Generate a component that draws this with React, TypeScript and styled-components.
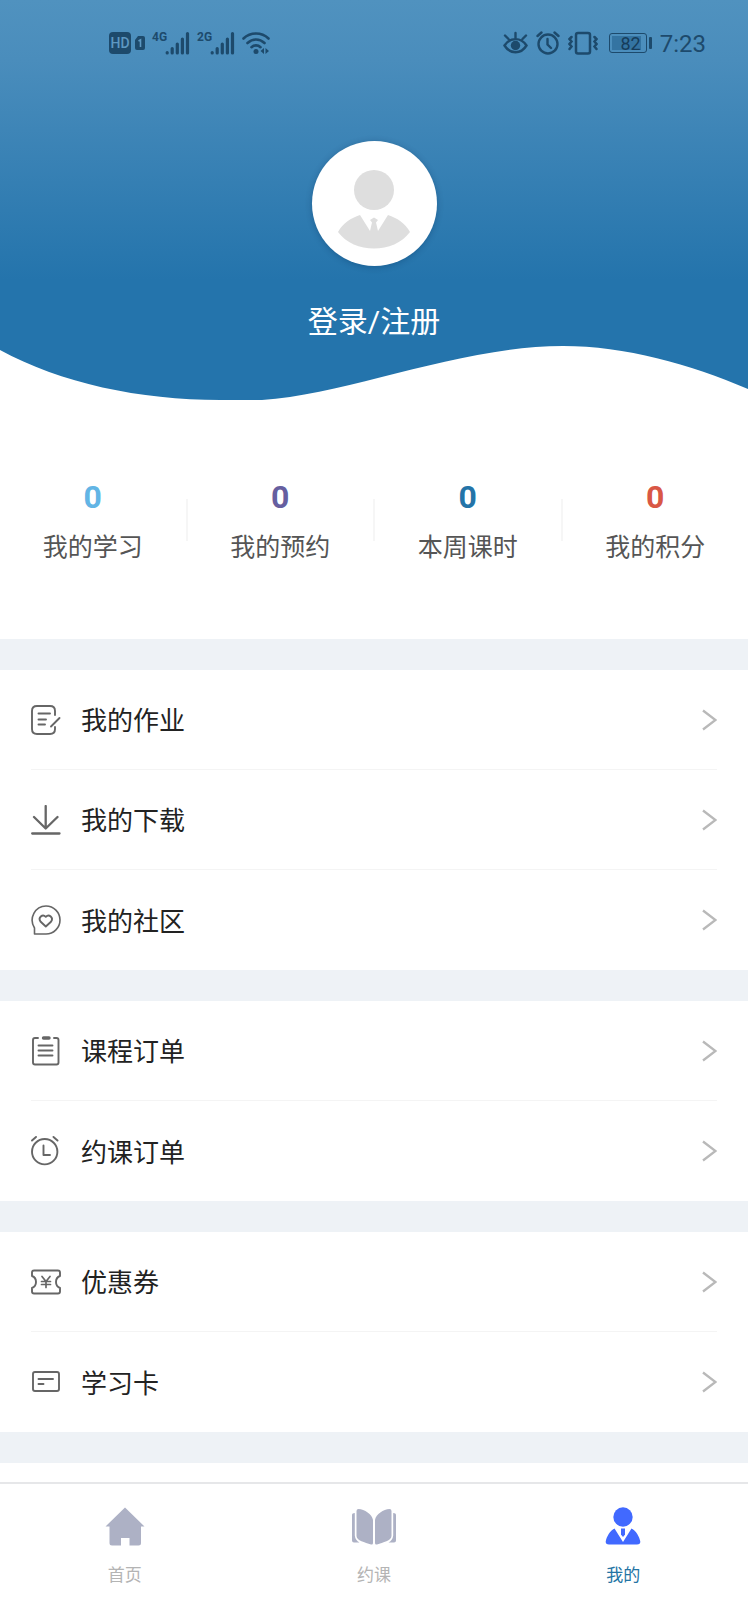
import React from "react";
import styled, { createGlobalStyle } from "styled-components";

const GlobalStyle = createGlobalStyle`
  * { box-sizing: border-box; }
  body {
    margin: 0;
    background: #fff;
    font-family: Roboto, "Noto Sans CJK SC", sans-serif;
  }
  a { color: inherit; text-decoration: none; }
  svg { display: block; flex: none; }
`;

const INK = "#1d4a6c";

const Page = styled.div`
  display: flex;
  flex-direction: column;
  min-height: 100vh;
  background: #fff;
`;

const Hero = styled.header`
  position: relative;
  display: flex;
  flex-direction: column;
  align-items: center;
  padding-bottom: 58px;
  background: linear-gradient(#5092bf 0, #4a8dbc 60px, #2474ac 280px);
`;

const Wave = styled.svg`
  position: absolute;
  left: 0;
  bottom: 0;
  width: 100%;
  height: 56px;
`;

const StatusBar = styled.div`
  display: flex;
  align-items: center;
  justify-content: space-between;
  width: 100%;
  height: 86px;
  padding: 0 42px 0 109px;
  color: ${INK};
`;

const StatusGroup = styled.div<{ $gap: number }>`
  display: flex;
  align-items: center;
  gap: ${(p) => p.$gap}px;
`;

const HdBadge = styled.span`
  width: 22px;
  height: 22px;
  border-radius: 4px;
  background: ${INK};
  color: #5d98c2;
  font-size: 14px;
  font-weight: 500;
  line-height: 22px;
  text-align: center;
`;

const Signal = styled.div`
  display: flex;
`;

const Network = styled.span`
  width: 13px;
  height: 22px;
  font-size: 12px;
  font-weight: 700;
  line-height: 12px;
`;

const Battery = styled.div`
  display: flex;
  align-items: center;
  gap: 2px;
  margin-left: 3px;
`;

const BatteryCell = styled.span`
  width: 38px;
  height: 20px;
  padding: 2px;
  border: 1px solid ${INK};
  border-radius: 3px;
`;

const BatteryLevel = styled.span`
  display: block;
  width: 29px;
  height: 14px;
  background: #3474a2;
  color: #163c5a;
  font-size: 18px;
  line-height: 15px;
  text-align: right;
`;

const BatteryTip = styled.span`
  width: 3px;
  height: 12px;
  border-radius: 1px;
  background: ${INK};
`;

const Clock = styled.time`
  font-size: 24px;
  line-height: 28px;
  padding-top: 2px;
`;

const Avatar = styled.div`
  display: flex;
  align-items: flex-end;
  justify-content: center;
  width: 125px;
  height: 125px;
  margin-top: 55px;
  padding-bottom: 16px;
  border-radius: 50%;
  background: #fff;
  box-shadow: 0 1px 6px rgba(0, 40, 80, 0.3);
`;

const LoginButton = styled.button`
  margin-top: 35px;
  padding: 0;
  border: 0;
  background: none;
  color: #fff;
  font-family: inherit;
  font-size: 30px;
  line-height: 41px;
  cursor: pointer;
`;

const Stats = styled.section`
  display: flex;
  padding: 81px 0 73px;
`;

const Stat = styled.a`
  display: flex;
  flex: 1;
  flex-direction: column;
  align-items: center;
  gap: 17px;
`;

const StatValue = styled.strong<{ $color: string }>`
  color: ${(p) => p.$color};
  font-size: 32px;
  line-height: 32px;
`;

const StatLabel = styled.span`
  color: #555;
  font-size: 25px;
  line-height: 36px;
  white-space: nowrap;
`;

const StatDivider = styled.span`
  width: 2px;
  height: 42px;
  margin-top: 18px;
  background: #f6f6f6;
`;

const Menu = styled.nav`
  padding: 0 31px;
  border-top: 31px solid #eef2f6;
`;

const MenuRow = styled.a`
  display: flex;
  align-items: center;
  height: 100px;
  color: #222;
  font-size: 26px;
  line-height: 40px;

  &:not(:last-child) {
    border-bottom: 1px solid #f4f4f4;
  }
`;

const MenuLabel = styled.span`
  flex: 1;
  margin-left: 20px;
  padding-top: 3px;
`;

const Spacer = styled.div`
  flex: 1;
  min-height: 18px;
  border-top: 31px solid #eef2f6;
`;

const TabBar = styled.nav`
  position: sticky;
  bottom: 0;
  display: flex;
  height: 118px;
  padding-top: 23px;
  border-top: 2px solid #e6e7e9;
  background: #fff;
`;

const Tab = styled.a<{ $active?: boolean }>`
  display: flex;
  flex: 1;
  flex-direction: column;
  align-items: center;
  gap: 15px;
  color: ${(p) => (p.$active ? "#2474a4" : "#b4b4b4")};
  font-size: 17px;
  line-height: 26px;
`;

const SimIcon = () => (
  <svg width="10" height="14" viewBox="0 0 10 14">
    <path d="M3 0H8a2 2 0 0 1 2 2V12a2 2 0 0 1-2 2H2a2 2 0 0 1-2-2V4Z" fill={INK} />
    <path d="M3.500 5 5.500 3.800V11" fill="none" stroke="#5d98c2" strokeWidth="1.600" />
  </svg>
);

const BarsIcon = () => (
  <svg width="25" height="24" viewBox="0 0 25 24" stroke={INK} strokeWidth="3.200" strokeLinecap="round">
    <path d="M2.200 21.500V22M7.200 17.500V22M12.300 13V22M17.400 8V22M22.500 2.500V22" />
  </svg>
);

const WifiIcon = () => (
  <svg width="28" height="24" viewBox="0 0 28 24" fill="none" stroke={INK} strokeWidth="2.600" strokeLinecap="round">
    <path d="M1.500 7.500C8.500.8 19.500.8 26.500 7.500M5.500 12C10.500 7.300 17.500 7.300 22.500 12M9.500 16.200C12 13.800 16 13.800 18.500 16.200" />
    <circle cx="14" cy="20.500" r="2.500" fill={INK} stroke="none" />
    <path d="M22 17v6l-3.500-3ZM23.500 17v6l3.500-3Z" fill={INK} stroke="none" />
  </svg>
);

const EyeIcon = () => (
  <svg width="25" height="24" viewBox="0 0 25 24" fill="none" stroke={INK} strokeWidth="2.400" strokeLinecap="round">
    <path d="M1.500 14.500C7 6 18 6 23.500 14.500 18 23.500 7 23.500 1.500 14.500ZM12.500 7V2M5.500 8 2 4.500M19.500 8 23 4.500" />
    <circle cx="12.500" cy="14.500" r="4.700" fill={INK} stroke="none" />
  </svg>
);

const AlarmIcon = () => (
  <svg width="24" height="24" viewBox="0 0 24 24" fill="none" stroke={INK} strokeWidth="2.400" strokeLinecap="round">
    <circle cx="12" cy="13" r="9.500" />
    <path d="M1.500 5 5.500 1.500M22.500 5 18.500 1.500M11.500 8V13.500L15 17" />
  </svg>
);

const VibrateIcon = () => (
  <svg width="30" height="24" viewBox="0 0 30 24" fill="none" stroke={INK} strokeWidth="2.500" strokeLinecap="round">
    <rect x="8" y="2" width="14" height="20.500" rx="2" />
    <path d="m3.500 6-2 2 2 2.500-2 2.500 2 2.500-2 2.500M26.500 6l2 2-2 2.500 2 2.500-2 2.500 2 2.500" />
  </svg>
);

const AvatarIcon = () => (
  <svg width="74" height="80" viewBox="0 0 74 80" fill="#dedede">
    <circle cx="37" cy="20" r="20" />
    <path d="M23 45 33 61 35 52.500 33 50 37 47.500 41 50 39 52.500 41 61 51 45C60 48 68 53 73 62 57 84 17 84 1 62 6 53 14 48 23 45Z" />
  </svg>
);

const Line = ({ children }: { children: React.ReactNode }) => (
  <svg
    width="30"
    height="30"
    viewBox="0 0 30 30"
    fill="none"
    stroke="#666"
    strokeWidth="1.900"
    strokeLinecap="round"
    strokeLinejoin="round"
  >
    {children}
  </svg>
);

const HomeworkIcon = () => (
  <Line>
    <path d="M24 10V6Q24 1 19 1H6Q1 1 1 6V24Q1 29 6 29H19Q24 29 24 24V22M7.500 8.500H19M7.500 14.500H15M7.500 19.500H14M20 21.500 28.500 13" />
  </Line>
);

const DownloadIcon = () => (
  <Line>
    <path d="M14.700 1V23M3 12 14.700 23.500 26.500 12M1.200 28.500H28.500" strokeWidth="2.300" />
  </Line>
);

const CommunityIcon = () => (
  <Line>
    <path d="M15 1A14 14 0 1 1 15 29H3.500V23C-2.500 13.500 4 1 15 1Z" strokeWidth="1.600" />
    <path d="M14.800 21.500 9.700 16.800C6.500 12.800 11.500 8.500 14.800 11.800 18 8.500 23 12.800 20 16.800Z" />
  </Line>
);

const CourseOrderIcon = () => (
  <Line>
    <path d="M7 2H4Q2 2 2 4V26.500Q2 28.500 4 28.500H25.500Q27.500 28.500 27.500 26.500V4Q27.500 2 25.500 2H23M7.500 9.500H21.500M7.500 14.500H21.500M7.500 19.500H21.500" />
    <path d="M12.500 2H18" strokeWidth="3.400" />
  </Line>
);

const BookingOrderIcon = () => (
  <Line>
    <circle cx="13.700" cy="15.700" r="12.700" />
    <path d="M1 4.500 5 1M26.500 4.500 22.500 1M12.500 9.500V19H19" />
  </Line>
);

const CouponIcon = () => (
  <Line>
    <path d="M3 3.500H27Q29 3.500 29 5.500V9Q25 10.500 25 15T29 21V24.500Q29 26.500 27 26.500H3Q1 26.500 1 24.500V21Q5 19.500 5 15T1 9V5.500Q1 3.500 3 3.500Z" />
    <path d="m11 9.500 4 5 4-5M15 14.500V20.500M10.500 14.500H19.500M10.500 17.500H19.500" strokeWidth="1.700" />
  </Line>
);

const CardIcon = () => (
  <Line>
    <rect x="2" y="5" width="26" height="19" rx="2" />
    <path d="M7.500 12H22M7.500 17H12.500" />
  </Line>
);

const Chevron = () => (
  <svg width="15" height="22" viewBox="0 0 15 22" fill="none" stroke="#b9b9b9" strokeWidth="2.300">
    <path d="M1 1.500 13.500 11 1 20.500" />
  </svg>
);

const HomeIcon = () => (
  <svg width="40" height="40" viewBox="0 0 40 40" fill="#adb1c5">
    <path d="M20 .500 39.500 19.500H36V36Q36 38.500 33.500 38.500H24.500V31H16V38.500H7Q4.500 38.500 4.500 36V19.500H.500Z" />
  </svg>
);

const BookIcon = () => (
  <svg width="46" height="40" viewBox="0 0 46 40" fill="#adb1c5">
    <path d="M5.500 4Q5.500 2 7.500 2C13.500 2.500 21 7 22 13V36Q22 38 20 37.500C14 35.500 5.500 33.500 5.500 29ZM40.500 4Q40.500 2 38.500 2C32.500 2.500 25 7 24 13V36Q24 38 26 37.500C32 35.500 40.500 33.500 40.500 29Z" />
    <path d="M3.800 6V28.500Q4.200 33 8.500 35.500H3Q1 35.500 1 33.500V8Q1 6 3.800 6ZM42.200 6V28.500Q41.800 33 37.500 35.500H43Q45 35.500 45 33.500V8Q45 6 42.200 6Z" />
  </svg>
);

const ProfileIcon = () => (
  <svg width="36" height="40" viewBox="0 0 36 40" fill="#4169ff">
    <circle cx="18" cy="10" r="9.700" />
    <path d="M9.500 21.500 18 35 26.500 21.500C31 23.500 34.500 30 35.300 34.500Q35.500 37.500 32 37.500H4Q.5 37.500.7 34.500C1.500 30 5 23.500 9.500 21.500Z" />
    <path d="M16 21.500H20V27.500L18 30 16 27.500Z" />
  </svg>
);

const stats = [
  { label: "我的学习", value: 0, color: "#62b5e5" },
  { label: "我的预约", value: 0, color: "#665fa0" },
  { label: "本周课时", value: 0, color: "#2474a8" },
  { label: "我的积分", value: 0, color: "#d95745" },
];

const menus = [
  [
    { label: "我的作业", Icon: HomeworkIcon },
    { label: "我的下载", Icon: DownloadIcon },
    { label: "我的社区", Icon: CommunityIcon },
  ],
  [
    { label: "课程订单", Icon: CourseOrderIcon },
    { label: "约课订单", Icon: BookingOrderIcon },
  ],
  [
    { label: "优惠券", Icon: CouponIcon },
    { label: "学习卡", Icon: CardIcon },
  ],
];

const tabs = [
  { label: "首页", Icon: HomeIcon },
  { label: "约课", Icon: BookIcon },
  { label: "我的", Icon: ProfileIcon, active: true },
];

export default function App() {
  return (
    <Page>
      <GlobalStyle />
      <Hero>
        <Wave viewBox="0 0 748 56" preserveAspectRatio="none" fill="#fff">
          <path d="M0 6C60 39 140 56 220 56H262C350 50 460 2 563 2 625 2 690 20 748 45V56H0Z" />
        </Wave>
        <StatusBar>
          <StatusGroup $gap={7}>
            <StatusGroup $gap={4}>
              <HdBadge>HD</HdBadge>
              <SimIcon />
            </StatusGroup>
            {["4G", "2G"].map((network) => (
              <Signal key={network}>
                <Network>{network}</Network>
                <BarsIcon />
              </Signal>
            ))}
            <WifiIcon />
          </StatusGroup>
          <StatusGroup $gap={8}>
            <EyeIcon />
            <AlarmIcon />
            <VibrateIcon />
            <Battery>
              <BatteryCell>
                <BatteryLevel>82</BatteryLevel>
              </BatteryCell>
              <BatteryTip />
            </Battery>
            <Clock>7:23</Clock>
          </StatusGroup>
        </StatusBar>
        <Avatar>
          <AvatarIcon />
        </Avatar>
        <LoginButton type="button">登录/注册</LoginButton>
      </Hero>

      <Stats>
        {stats.map((stat, index) => (
          <React.Fragment key={stat.label}>
            {index > 0 && <StatDivider />}
            <Stat href="#">
              <StatValue $color={stat.color}>{stat.value}</StatValue>
              <StatLabel>{stat.label}</StatLabel>
            </Stat>
          </React.Fragment>
        ))}
      </Stats>

      {menus.map((items) => (
        <Menu key={items[0].label}>
          {items.map(({ label, Icon }) => (
            <MenuRow href="#" key={label}>
              <Icon />
              <MenuLabel>{label}</MenuLabel>
              <Chevron />
            </MenuRow>
          ))}
        </Menu>
      ))}
      <Spacer />

      <TabBar>
        {tabs.map(({ label, Icon, active }) => (
          <Tab href="#" key={label} $active={active}>
            <Icon />
            {label}
          </Tab>
        ))}
      </TabBar>
    </Page>
  );
}
